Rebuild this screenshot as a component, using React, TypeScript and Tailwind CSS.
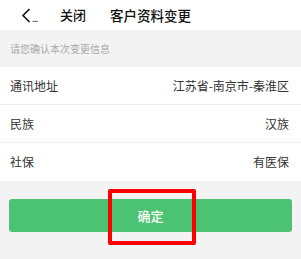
export default function App() {
  const rows = [
    { label: '通讯地址', value: '江苏省-南京市-秦淮区' },
    { label: '民族', value: '汉族' },
    { label: '社保', value: '有医保' },
  ];

  return (
    <div
      className="min-h-screen bg-[#f4f3f4]"
      style={{ fontFamily: '"Noto Sans CJK SC", "Noto Sans", sans-serif' }}
    >
      {/* top bar */}
      <div className="h-[30px] bg-white flex items-center text-[#111]">
        <div className="flex items-center pl-[21px] w-[60px]">
          <svg width="10" height="15" viewBox="0 0 10 15" fill="none">
            <path d="M8.5 1 L2 7.5 L8.5 14" stroke="#111" strokeWidth="1.6" />
          </svg>
          <span className="text-[10px] leading-none mt-[6px] ml-[1px] tracking-[-1px]">...</span>
        </div>
        <span className="text-[13px] font-medium">关闭</span>
        <span className="text-[13.5px] font-medium ml-[24px]">客户资料变更</span>
      </div>

      {/* hint */}
      <div className="h-[37px] flex items-center pl-[10px] text-[10px] text-[#a8a8a8]">
        请您确认本次变更信息
      </div>

      {/* detail rows */}
      <div className="bg-white">
        {rows.map((r, i) => (
          <div
            key={r.label}
            className={`h-[38px] flex items-center justify-between pl-[10px] pr-[12px] text-[12px] text-[#333] ${
              i < rows.length - 1 ? 'border-b border-[#efefef]' : ''
            }`}
          >
            <span>{r.label}</span>
            <span>{r.value}</span>
          </div>
        ))}
      </div>

      {/* confirm */}
      <div className="px-[9px] pt-[18px]">
        <div className="relative h-[33px] rounded-[3px] bg-[#4bc373] flex items-center justify-center text-white text-[13px] font-medium">
          确定
          <div className="absolute left-[99px] top-[-10px] w-[88px] h-[56px] border-[4px] border-[#ff0000] rounded-[2px]" />
        </div>
      </div>
    </div>
  );
}
